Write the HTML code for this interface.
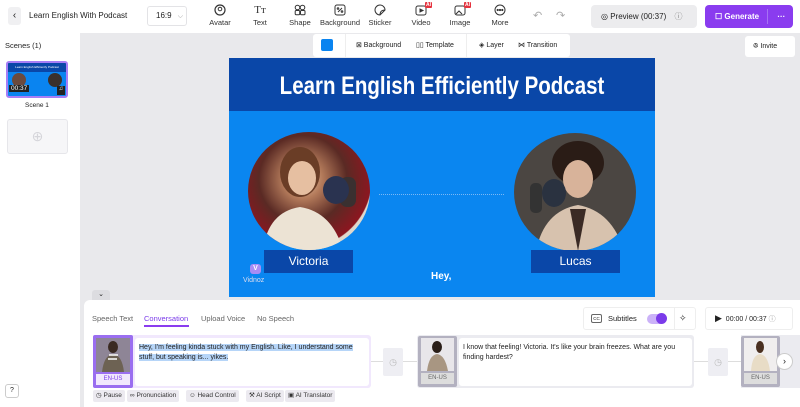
<!DOCTYPE html>
<html><head><meta charset="utf-8"><style>
*{box-sizing:border-box;margin:0;padding:0}
body{width:800px;height:407px;overflow:hidden;font-family:"Liberation Sans",sans-serif;background:#e9e9ec;position:relative;color:#222}
.a{position:absolute}
.top{left:0;top:0;width:800px;height:33px;background:#fff}
.tool{position:absolute;top:4px;width:40px;text-align:center;font-size:7.5px;color:#333}
.tool svg{display:block;margin:0 auto 2px}
.ai{position:absolute;top:-2px;right:9px;background:#e5323e;color:#fff;font-size:5px;padding:0 1px;border-radius:1px;font-weight:bold}
.chip{position:absolute;top:390px;height:12px;background:#eceaf0;border-radius:2px;font-size:6.5px;color:#333;line-height:12px;padding:0 3px}
</style></head><body>
<div class="a top"></div>
<div class="a" style="left:8px;top:7px;width:13px;height:18px;background:#f0f0f2;border-radius:3px;font-size:10px;text-align:center;line-height:18px">‹</div>
<div class="a" style="left:29px;top:11px;font-size:8px;color:#222">Learn English With Podcast</div>
<div class="a" style="left:147px;top:6px;width:40px;height:20px;border:1px solid #e3e3e6;border-radius:3px;font-size:8px;line-height:18px;padding-left:8px">16:9 <span style="color:#999;font-size:7px;margin-left:4px">⌵</span></div>
<div class="tool" style="left:200px"><svg width="12" height="12" viewBox="0 0 12 12"><circle cx="6" cy="6" r="5" fill="none" stroke="#333" stroke-width="1.2"/><circle cx="6" cy="5" r="1.8" fill="none" stroke="#333"/></svg>Avatar</div>
<div class="tool" style="left:240px"><div style="font-size:11px;font-family:'Liberation Serif',serif;height:14px">Tт</div>Text</div>
<div class="tool" style="left:280px"><svg width="12" height="12" viewBox="0 0 12 12" fill="none" stroke="#333"><circle cx="3.5" cy="3.5" r="2.3"/><circle cx="8.5" cy="3.5" r="2.3"/><rect x="1.2" y="6.5" width="4.5" height="4.3" rx="1"/><rect x="6.5" y="6.5" width="4.5" height="4.3" rx="1"/></svg>Shape</div>
<div class="tool" style="left:320px"><svg width="12" height="12" viewBox="0 0 12 12" fill="none" stroke="#333"><rect x="1" y="1" width="10" height="10" rx="2"/><path d="M4 8L8 4"/><circle cx="4" cy="4.5" r=".8"/><circle cx="8" cy="7.5" r=".8"/></svg>Background</div>
<div class="tool" style="left:360px"><svg width="12" height="12" viewBox="0 0 12 12" fill="none" stroke="#333"><path d="M11 6A5 5 0 1 0 6 11L11 6Z M6 11Q6 6 11 6"/></svg>Sticker</div>
<div class="tool" style="left:401px"><svg width="12" height="12" viewBox="0 0 12 12" fill="none" stroke="#333"><rect x="1" y="2" width="10" height="9" rx="2"/><path d="M5 5v3l3-1.5z" fill="#333"/></svg>Video<span class="ai">AI</span></div>
<div class="tool" style="left:440px"><svg width="12" height="12" viewBox="0 0 12 12" fill="none" stroke="#333"><rect x="1" y="2" width="10" height="9" rx="2"/><path d="M2 10l3-3 3 3"/></svg>Image<span class="ai">AI</span></div>
<div class="tool" style="left:480px"><svg width="12" height="12" viewBox="0 0 12 12" fill="none" stroke="#333"><circle cx="6" cy="6" r="5"/><circle cx="3.7" cy="6" r=".6" fill="#333"/><circle cx="6" cy="6" r=".6" fill="#333"/><circle cx="8.3" cy="6" r=".6" fill="#333"/></svg>More</div>
<div class="a" style="left:533px;top:9px;font-size:11px;color:#aaa">↶</div>
<div class="a" style="left:556px;top:9px;font-size:11px;color:#aaa">↷</div>
<div class="a" style="left:591px;top:5px;width:106px;height:23px;background:#ececee;border-radius:4px;font-size:8px;line-height:23px;padding-left:10px">◎ Preview (00:37) <span style="color:#888;margin-left:6px">ⓘ</span></div>
<div class="a" style="left:705px;top:5px;width:88px;height:23px;background:#8a3cef;border-radius:4px;font-size:8px;line-height:23px;color:#fff;padding-left:10px;font-weight:bold">☐ Generate <span style="position:absolute;left:62px;top:4px;height:15px;border-left:1px solid #a672f4"></span><span style="margin-left:16px">···</span></div>
<!-- left panel -->
<div class="a" style="left:0;top:33px;width:80px;height:374px;background:#fff"></div>
<div class="a" style="left:5px;top:41px;font-size:7.5px">Scenes (1)</div>
<div class="a" style="left:6px;top:61px;width:62px;height:37px;border:2px solid #a77ef5;border-radius:3px;background:#0a84f0;overflow:hidden">
<div style="height:9px;background:#0a47a8;color:#fff;font-size:3px;text-align:center;line-height:9px">Learn English Efficiently Podcast</div>
<div class="a" style="left:4px;top:10px;width:14px;height:14px;border-radius:50%;background:#6b4a3e"></div>
<div class="a" style="left:40px;top:10px;width:14px;height:14px;border-radius:50%;background:#3a302c"></div>
<div class="a" style="left:1px;top:22px;background:#222;color:#fff;font-size:6.5px;padding:0 2px">00:37</div>
<div class="a" style="left:49px;top:23px;background:#222;color:#fff;font-size:6px;width:8px;height:9px;text-align:center">♫</div>
</div>
<div class="a" style="left:25px;top:102px;font-size:6.5px">Scene 1</div>
<div class="a" style="left:7px;top:119px;width:61px;height:35px;border:1px solid #e6e6ea;border-radius:3px;background:#f6f6f8;text-align:center;line-height:33px;color:#d5d5da;font-size:14px">⊕</div>
<!-- canvas toolbar -->
<div class="a" style="left:313px;top:34px;width:257px;height:23px;background:#fff;border-radius:3px;font-size:7px;line-height:23px">
<span class="a" style="left:8px;top:5px;width:12px;height:12px;background:#0a84f0;border-radius:2px"></span>
<span class="a" style="left:32px;top:0;height:23px;border-left:1px solid #eee"></span>
<span class="a" style="left:43px">⊠ Background</span><span class="a" style="left:103px">▯▯ Template</span>
<span class="a" style="left:153px;top:0;height:23px;border-left:1px solid #eee"></span>
<span class="a" style="left:166px">◈ Layer</span><span class="a" style="left:205px">⋈ Transition</span></div>
<div class="a" style="left:745px;top:36px;width:50px;height:21px;background:#fff;border-radius:3px;font-size:7px;line-height:21px;padding-left:8px">ꔮ Invite</div>
<!-- canvas -->
<div class="a" style="left:229px;top:58px;width:426px;height:239px;background:#0a86f0;overflow:hidden">
<div style="height:53px;background:#0a47a8"></div>
<div class="a" style="left:0;top:0;width:426px;text-align:center;color:#fff;font-weight:bold;font-size:25px;line-height:57px;transform:scaleX(0.82);transform-origin:213px 0">Learn English Efficiently Podcast</div>
<div class="a" style="left:19px;top:74px;width:122px;height:118px;border-radius:50%;background:radial-gradient(circle at 45% 40%,#e7c3a6 0,#b37a5a 20%,#5a2a24 45%,#8d1620 70%,#dfd8cc 71%);overflow:hidden">
<svg width="122" height="118"><ellipse cx="52" cy="40" rx="20" ry="25" fill="#6a3d26"/><ellipse cx="54" cy="46" rx="14" ry="17" fill="#e6bfa1"/><path d="M15 118 Q20 80 52 75 Q84 80 95 118Z" fill="#ece3d4"/><rect x="92" y="45" width="16" height="30" rx="7" fill="#3a3030"/><ellipse cx="88" cy="58" rx="13" ry="14" fill="#2a3350"/></svg></div>
<div class="a" style="left:285px;top:75px;width:122px;height:118px;border-radius:50%;background:#4b4642;overflow:hidden">
<svg width="122" height="118"><ellipse cx="64" cy="30" rx="26" ry="22" fill="#2a1c16"/><ellipse cx="64" cy="46" rx="15" ry="19" fill="#d8b39a"/><path d="M22 118 Q30 78 64 72 Q98 78 110 118Z" fill="#d7c2ae"/><path d="M56 76 L64 118 L72 76Z" fill="#3a2a24"/><rect x="16" y="50" width="12" height="30" rx="5" fill="#333"/><ellipse cx="40" cy="60" rx="12" ry="14" fill="#2a3240"/></svg></div>
<div class="a" style="left:150px;top:136px;width:125px;border-top:1px dotted #7ab8f5"></div>
<div class="a" style="left:35px;top:192px;width:89px;height:23px;background:#0a47a8;color:#fff;font-size:12px;text-align:center;line-height:23px">Victoria</div>
<div class="a" style="left:302px;top:192px;width:89px;height:23px;background:#0a47a8;color:#fff;font-size:12px;text-align:center;line-height:23px">Lucas</div>
<div class="a" style="left:21px;top:206px;width:11px;height:10px;background:#a98cf5;border-radius:3px;color:#fff;font-size:7px;text-align:center;line-height:10px;font-weight:bold">V</div>
<div class="a" style="left:14px;top:219px;font-size:7px;color:#dde">Vidnoz</div>
<div class="a" style="left:202px;top:213px;font-size:10px;color:#fff;font-weight:bold">Hey,</div>
</div>
<!-- bottom panel -->
<div class="a" style="left:92px;top:290px;width:18px;height:10px;background:#dcdce0;border-radius:3px 3px 0 0;font-size:7px;text-align:center;line-height:10px">⌄</div>
<div class="a" style="left:84px;top:300px;width:716px;height:107px;background:#fff;border-radius:6px 0 0 0"></div>
<div class="a" style="left:92px;top:314px;font-size:7.5px;color:#666">Speech Text</div>
<div class="a" style="left:144px;top:314px;font-size:7.5px;color:#7b3bea">Conversation</div>
<div class="a" style="left:144px;top:325px;width:45px;height:2px;background:#8a3cef"></div>
<div class="a" style="left:201px;top:314px;font-size:7.5px;color:#666">Upload Voice</div>
<div class="a" style="left:257px;top:314px;font-size:7.5px;color:#666">No Speech</div>
<div class="a" style="left:583px;top:307px;width:113px;height:23px;border:1px solid #eee;border-radius:3px;font-size:7.5px;line-height:21px">
<span class="a" style="left:7px;top:6px;width:11px;height:9px;border:1px solid #666;border-radius:2px;font-size:4.5px;line-height:7px;text-align:center">CC</span>
<span class="a" style="left:24px">Subtitles</span>
<span class="a" style="left:63px;top:6px;width:19px;height:10px;background:#cbb2f8;border-radius:5px"></span>
<span class="a" style="left:72px;top:5px;width:11px;height:11px;background:#7b3bea;border-radius:50%"></span>
<span class="a" style="left:90px;top:0;height:21px;border-left:1px solid #eee"></span>
<span class="a" style="left:95px;font-size:9px">✧</span></div>
<div class="a" style="left:705px;top:307px;width:88px;height:23px;border:1px solid #eee;border-radius:3px;font-size:7px;line-height:21px;padding-left:9px"><span style="font-size:9px">▶</span> &nbsp;00:00 / 00:37 <span style="color:#999">ⓘ</span></div>
<!-- card 1 -->
<div class="a" style="left:93px;top:335px;width:278px;height:53px;background:#f1e8fd;border-radius:3px"></div>
<div class="a" style="left:93px;top:335px;width:40px;height:53px;background:#9a6ef0;border-radius:2px"></div>
<div class="a" style="left:96px;top:338px;width:34px;height:34px;background:#8e8596"><svg width="34" height="34"><ellipse cx="17" cy="9" rx="5" ry="6" fill="#3a2a22"/><path d="M6 34Q8 17 17 16Q26 17 28 34Z" fill="#6d6253"/><path d="M13 17h9M21 21h-9" stroke="#fff" stroke-width="1.5"/></svg></div>
<div class="a" style="left:96px;top:374px;width:34px;height:11px;background:#f1e8fd;font-size:6px;color:#7b3bea;text-align:center;line-height:11px">EN-US</div>
<div class="a" style="left:135px;top:338px;width:234px;height:48px;background:#fff;border-radius:3px"></div>
<div class="a" style="left:139px;top:343px;font-size:7px;line-height:10px;width:225px"><span style="background:#b6d5f8">Hey, I'm feeling kinda stuck with my English. Like, I understand some stuff, but speaking is... yikes.</span></div>
<div class="a" style="left:371px;top:361px;width:46px;border-top:1px solid #ddd"></div>
<div class="a" style="left:383px;top:348px;width:20px;height:28px;background:#eeeef3;border-radius:2px;color:#bbb;font-size:9px;text-align:center;line-height:28px">◷</div>
<!-- card 2 -->
<div class="a" style="left:417px;top:335px;width:277px;height:53px;background:#ebebf0;border-radius:3px"></div>
<div class="a" style="left:418px;top:336px;width:39px;height:51px;background:#b3b1c0;border-radius:2px"></div>
<div class="a" style="left:421px;top:338px;width:33px;height:33px;background:#e8e6ea"><svg width="33" height="33"><ellipse cx="16" cy="9" rx="5" ry="6" fill="#2a1e18"/><path d="M6 33Q8 17 16 16Q24 17 27 33Z" fill="#a89682"/></svg></div>
<div class="a" style="left:421px;top:373px;width:33px;height:11px;background:#ddd;font-size:6px;color:#666;text-align:center;line-height:11px">EN-US</div>
<div class="a" style="left:459px;top:338px;width:233px;height:48px;background:#fff;border-radius:3px"></div>
<div class="a" style="left:463px;top:343px;font-size:7px;line-height:10px;width:225px">I know that feeling! Victoria. It's like your brain freezes. What are you finding hardest?</div>
<div class="a" style="left:694px;top:361px;width:47px;border-top:1px solid #ddd"></div>
<div class="a" style="left:708px;top:348px;width:20px;height:28px;background:#eeeef3;border-radius:2px;color:#bbb;font-size:9px;text-align:center;line-height:28px">◷</div>
<!-- card 3 -->
<div class="a" style="left:741px;top:335px;width:59px;height:53px;background:#ebebf0"></div>
<div class="a" style="left:741px;top:336px;width:39px;height:51px;background:#b3b1c0;border-radius:2px"></div>
<div class="a" style="left:744px;top:338px;width:33px;height:33px;background:#f0eeee"><svg width="33" height="33"><ellipse cx="16" cy="9" rx="4" ry="6" fill="#4a3020"/><path d="M7 33Q8 17 16 16Q24 17 26 33Z" fill="#e8dcc6"/></svg></div>
<div class="a" style="left:744px;top:373px;width:33px;height:11px;background:#ddd;font-size:6px;color:#666;text-align:center;line-height:11px">EN-US</div>
<div class="a" style="left:776px;top:353px;width:17px;height:17px;background:#fff;border:1px solid #ccc;border-radius:50%;font-size:9px;text-align:center;line-height:15px">›</div>
<!-- chips -->
<div class="chip" style="left:93px">◷ Pause</div>
<div class="chip" style="left:127px">∞ Pronunciation</div>
<div class="chip" style="left:186px">☺ Head Control</div>
<div class="chip" style="left:246px">⚒ AI Script</div>
<div class="chip" style="left:285px">▣ AI Translator</div>
<div class="a" style="left:5px;top:384px;width:14px;height:14px;border:1px solid #ccc;border-radius:3px;background:#fff;font-size:7px;text-align:center;line-height:12px">?</div>
</body></html>
